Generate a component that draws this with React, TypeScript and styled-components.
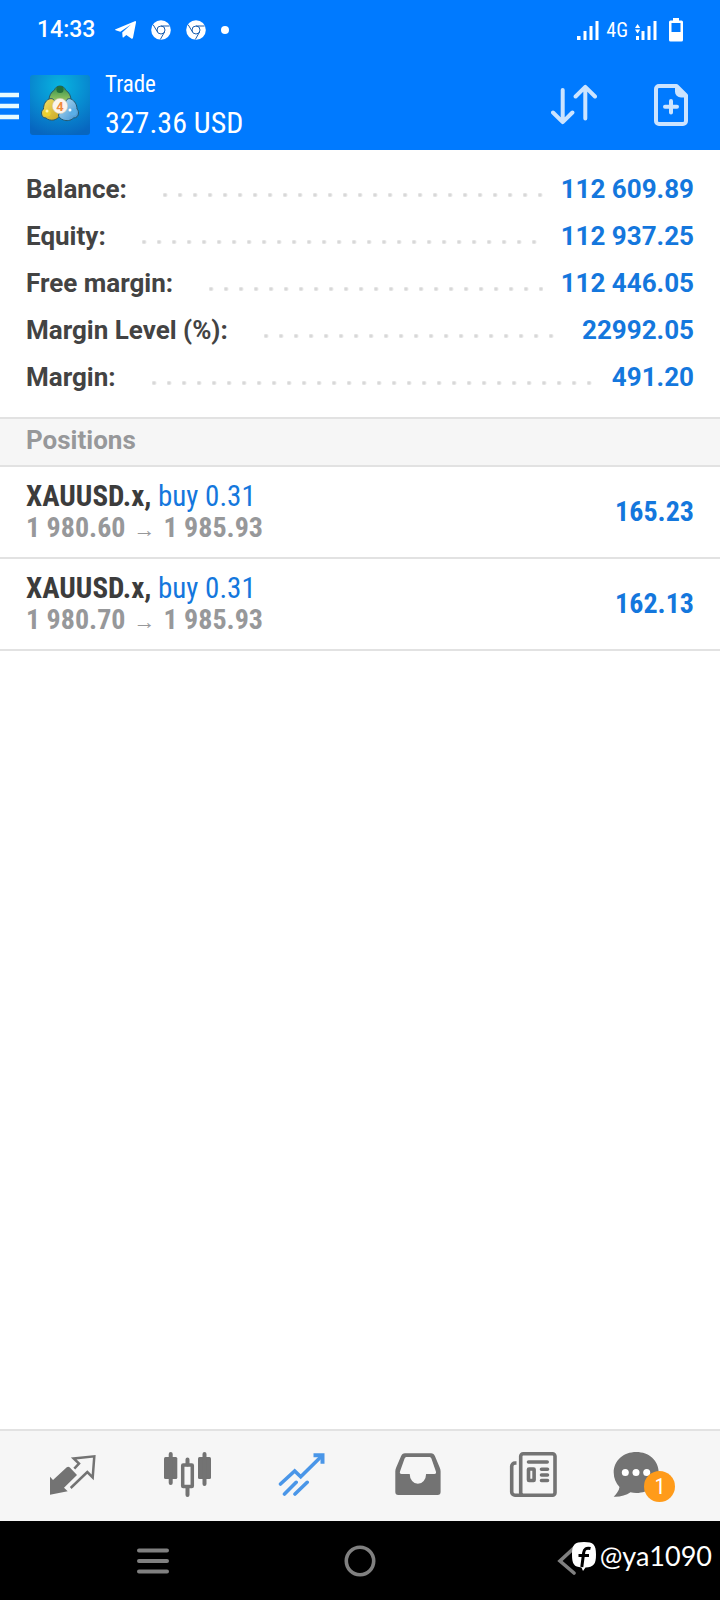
import React from "react";
import styled, { createGlobalStyle } from "styled-components";

const sans = `Roboto, "Liberation Sans", sans-serif`;
const narrow = `"Roboto Condensed", "Liberation Sans Narrow", Roboto, sans-serif`;
const blue = "#1477dd";

const GlobalStyle = createGlobalStyle`
  *, *::before, *::after { box-sizing: border-box; }
  body { margin: 0; background: #fff; font-family: ${sans}; }
  h1, h2, p, dl, dd, ul { margin: 0; padding: 0; }
  svg { display: block; flex: none; }
`;

const Screen = styled.div`
  display: flex;
  flex-direction: column;
  min-height: 100vh;
`;

const Header = styled.header`
  background: #007aff;
  color: #fff;
`;

const StatusBar = styled.div`
  display: flex;
  align-items: center;
  justify-content: space-between;
  height: 60px;
  padding: 0 37px;
`;

const StatusGroup = styled.div<{ $gap: number }>`
  display: flex;
  align-items: center;
  gap: ${(p) => p.$gap}px;
`;

const Clock = styled.time`
  margin-right: 5px;
  font-size: 23px;
  line-height: 28px;
  font-weight: 500;
`;

const NetworkType = styled.span`
  font-family: ${narrow};
  font-size: 20px;
  line-height: 24px;
`;

const AppBar = styled.div`
  display: flex;
  align-items: center;
  height: 90px;
  padding-right: 32px;
`;

const IconButton = styled.button`
  display: flex;
  align-items: center;
  justify-content: center;
  padding: 0;
  border: 0;
  background: none;
  color: inherit;
  cursor: pointer;
`;

const Logo = styled.svg`
  margin: 0 15px 0 11px;
`;

const Heading = styled.div`
  flex: 1;
  font-family: ${narrow};
`;

const Title = styled.h1`
  font-size: 23px;
  line-height: 36px;
  font-weight: 400;
`;

const Profit = styled.p`
  font-size: 30px;
  line-height: 40px;
`;

const Actions = styled.div`
  display: flex;
  align-items: center;
  gap: 57px;
  color: #cce4ff;
`;

const Content = styled.main`
  flex: 1;
`;

const Summary = styled.dl`
  && {
    padding: 16px 26px;
  }
  font-size: 26px;
  line-height: 47px;
`;

const SummaryRow = styled.div`
  display: flex;
`;

const SummaryLabel = styled.dt`
  color: #434343;
  font-weight: 700;
`;

const SummaryValue = styled.dd`
  display: flex;
  flex: 1;
  color: ${blue};
  font-weight: 700;
`;

const Leader = styled.span`
  flex: 1;
  margin: 0 18px 0 36px;
  background: radial-gradient(circle at 2px 2px, #d8d8d8 1px, transparent 3px) 0 27px / 15px 4px
    repeat-x;
`;

const SectionTitle = styled.h2`
  && {
    padding: 0 26px 4px;
  }
  border: solid #e2e2e2;
  border-width: 2px 0;
  background: #f6f6f6;
  color: #97989a;
  font-size: 26px;
  line-height: 42px;
  font-weight: 700;
`;

const PositionList = styled.ul`
  list-style: none;
  font-family: ${narrow};
  font-size: 28px;
  line-height: 32px;
  font-weight: 700;
`;

const PositionRow = styled.li`
  display: flex;
  align-items: center;
  justify-content: space-between;
  padding: 13px 26px;
  border-bottom: 2px solid #e2e2e2;
`;

const SymbolLine = styled.p`
  color: #3c3c3c;
  font-size: 29px;
`;

const Volume = styled.span`
  color: ${blue};
  font-weight: 400;
`;

const PriceLine = styled.p`
  color: #97989a;
`;

const Arrow = styled.span`
  margin: 0 8px;
  font-family: "Liberation Sans", sans-serif;
  font-size: 22px;
  line-height: 1;
  font-weight: 700;
`;

const Result = styled.span`
  color: ${blue};
`;

const TabBar = styled.nav`
  display: grid;
  grid-template-columns: repeat(6, 1fr);
  height: 92px;
  padding: 0 14px;
  border-top: 2px solid #e2e2e2;
  background: #f6f6f6;
`;

const TabButton = styled(IconButton)<{ $active?: boolean }>`
  color: ${(p) => (p.$active ? "#4a96e8" : "#737373")};
`;

const BadgeHost = styled.span`
  position: relative;
`;

const Badge = styled.span`
  position: absolute;
  left: 32px;
  top: 19px;
  width: 31px;
  height: 31px;
  border-radius: 50%;
  background: #ff9b1a;
  color: #fff;
  font-family: ${narrow};
  font-size: 22px;
  line-height: 31px;
  text-align: center;
`;

const SystemBar = styled.footer`
  position: relative;
  display: grid;
  grid-template-columns: repeat(3, 1fr);
  height: 79px;
  padding: 0 50px;
  background: #000;
  color: #808080;
`;

const Watermark = styled.div`
  position: absolute;
  right: 8px;
  top: 18px;
  display: flex;
  align-items: center;
  gap: 3px;
  color: #fff;
  font-family: Lato, sans-serif;
  font-size: 27px;
  line-height: 34px;
`;

const Telegram = () => (
  <svg width="21" height="18" viewBox="0 0 21 18" aria-hidden="true">
    <path
      fill="#fff"
      d="M.6 8.2 19.8.2c.8-.3 1.4.2 1.2 1.2l-3 15.3c-.2 1-.9 1.3-1.7.8l-5-3.6-2.6 2.4c-.5.5-1 .3-1.1-.4l-.4-4.4 8.8-8.1L5.3 10.7.7 9.3c-.8-.3-.9-.8-.1-1.1z"
    />
  </svg>
);

const Chrome = () => (
  <svg width="20" height="20" viewBox="0 0 20 20" aria-hidden="true">
    <circle cx="10" cy="10" r="9.8" fill="#fff" />
    <g fill="none" stroke="#1a5fb0" strokeWidth="1">
      <circle cx="10" cy="10" r="4" />
      <path d="M10 6h8.6M6.5 12 2.2 4.8M13.5 12 9.3 19.5" />
    </g>
  </svg>
);

const Dot = () => (
  <svg width="8" height="8" aria-hidden="true">
    <circle cx="4" cy="4" r="4" fill="#fff" />
  </svg>
);

const Signal = ({ data = false }: { data?: boolean }) => (
  <svg width="22" height="20" viewBox="0 0 22 20" fill="#fff" aria-hidden="true">
    <path d={data ? "M1 16h3v4H1z" : "M0 16h3.5v4H0z"} />
    <path d="M6.500 11h3v9h-3zM12.500 6h3v14h-3zM18.500 1h3v19h-3z" />
    {data && <path d="M2.600 4 5.200 8H0zM2.600 13.500 5.200 9.500H0z" />}
  </svg>
);

const Battery = () => (
  <svg width="14" height="24" viewBox="0 0 14 24" aria-hidden="true">
    <path
      fill="#fff"
      fillRule="evenodd"
      d="M4 0h6v2.500h2.500A1.500 1.500 0 0 1 14 4v18a1.500 1.500 0 0 1-1.500 1.500h-11A1.500 1.500 0 0 1 0 22V4a1.500 1.500 0 0 1 1.500-1.500H4zM2.500 5v9h9V5z"
    />
  </svg>
);

const MenuBars = () => (
  <svg width="19" height="30" aria-hidden="true">
    <path stroke="#e6faff" strokeWidth="4.500" d="M0 5h19M0 16h19M0 27h19" />
  </svg>
);

const AppLogo = () => (
  <Logo width="60" height="60" viewBox="0 0 60 60" role="img" aria-label="MetaTrader 4">
    <defs>
      <radialGradient id="sky" cx="50%" cy="18%" r="85%">
        <stop offset="0" stopColor="#08b4e0" />
        <stop offset=".55" stopColor="#088ad0" />
        <stop offset="1" stopColor="#0766c0" />
      </radialGradient>
      <linearGradient id="leaf" x2="0" y2="1">
        <stop offset="0" stopColor="#2f8f4a" />
        <stop offset="1" stopColor="#b5d56a" />
      </linearGradient>
      <linearGradient id="gold" x2="1" y2="1">
        <stop offset="0" stopColor="#f4e26a" />
        <stop offset="1" stopColor="#c8a51e" />
      </linearGradient>
      <linearGradient id="water" x2="1" y2="1">
        <stop offset="0" stopColor="#b8e2f5" />
        <stop offset="1" stopColor="#3c8fd2" />
      </linearGradient>
    </defs>
    <rect width="60" height="60" rx="3" fill="url(#sky)" />
    <g stroke="#24586e" strokeWidth="1">
      <path
        fill="url(#leaf)"
        d="M30 11c3 0 5 2 5.500 4 3.500 2 5.500 6 5.500 10 0 3-2 5-4 5H23c-3 0-4-2-4-5 0-4 2-8 5.500-10 .5-2 2.500-4 5.500-4z"
      />
      <path
        fill="url(#gold)"
        d="M19 24c3-1 5 0 6 3l5 12c0 3-3 5-6 6-3 .5-6 0-8-2-3 0-4.500-2-4.500-5 0-2 1-3 2-4 0-4 1.500-8 5.500-10z"
      />
      <path
        fill="url(#water)"
        d="M41 24c4 2 6 6 6 10 1 1 1.500 2 1.500 4 0 3-2 5-5 5-3 3-7 3-10 2-3-1-5-3-5-5l7-13c1-3 3-4 5.500-3z"
      />
    </g>
    <circle cx="30" cy="14.500" r="3.600" fill="#22703c" />
    <circle cx="17" cy="38" r="3.600" fill="#ecd22f" />
    <circle cx="43" cy="37" r="3.600" fill="#5aaee6" />
    <circle cx="17" cy="36" r="1.500" fill="#fff6b0" />
    <circle cx="40" cy="35" r="1.500" fill="#fff" />
    <circle cx="30" cy="31" r="7.600" fill="#fbf4ec" stroke="#d8cfb8" strokeWidth=".6" />
    <text
      x="30"
      y="35.500"
      fill="#f08a3c"
      fontFamily="Roboto, sans-serif"
      fontSize="13"
      fontWeight="700"
      textAnchor="middle"
    >
      4
    </text>
  </Logo>
);

const SortArrows = () => (
  <svg width="46" height="42" viewBox="0 0 46 42" aria-hidden="true">
    <path
      fill="none"
      stroke="currentColor"
      strokeWidth="4"
      strokeLinecap="round"
      strokeLinejoin="round"
      d="M11.700 6v32M2 28.500l9.700 9.700 9.700-9.700M34.300 34.500V3M24.600 12.500l9.700-9.700 9.700 9.700"
    />
  </svg>
);

const NewOrder = () => (
  <svg width="34" height="42" viewBox="0 0 34 42" aria-hidden="true">
    <path
      fill="none"
      stroke="currentColor"
      strokeWidth="4"
      strokeLinejoin="round"
      d="M5 2h17.500L32 11.500V37a3 3 0 0 1-3 3H5a3 3 0 0 1-3-3V5a3 3 0 0 1 3-3z"
    />
    <path fill="currentColor" d="M21 1h2l10 10v2.500h-6a6 6 0 0 1-6-6z" />
    <path
      stroke="currentColor"
      strokeWidth="4"
      strokeLinecap="round"
      d="M17 17v11.500M11 22.800h12"
    />
  </svg>
);

const QuotesIcon = () => (
  <svg width="48" height="48" viewBox="0 0 48 48" aria-hidden="true">
    <path
      fill="currentColor"
      d="M2 24.700 5 28 18.800 15.300q1.500-1.200 2.800 0L29 23 16 35.700l3.700 3.500L2 42.700z"
    />
    <path
      fill="none"
      stroke="currentColor"
      strokeWidth="2.500"
      d="M26.300 16.700 31 11.500 25.700 6.500 46.300 4.300l-1.600 21.200-5.400-5.400L22.700 36"
    />
  </svg>
);

const ChartIcon = () => (
  <svg width="48" height="48" viewBox="0 0 48 48" aria-hidden="true">
    <rect x="1" y="5" width="13.300" height="22" rx="1.500" fill="currentColor" />
    <rect x="35" y="5" width="13" height="22" rx="1.500" fill="currentColor" />
    <rect
      x="19.700"
      y="13"
      width="9.600"
      height="21.500"
      rx=".5"
      fill="none"
      stroke="currentColor"
      strokeWidth="3.500"
    />
    <path
      stroke="currentColor"
      strokeWidth="4"
      strokeLinecap="round"
      d="M7.700 2v29M41.500 2v30M24.500 7.500v5M24.500 35v8"
    />
  </svg>
);

const TradeIcon = () => (
  <svg width="48" height="48" viewBox="0 0 48 48" aria-hidden="true">
    <g fill="none" stroke="currentColor" strokeWidth="3.600">
      <path d="M2.500 32 16.700 19l6 5.700L44 3.800M6.500 42 18.200 30.300M17 42 29.200 30.300" strokeLinecap="round" />
      <path d="M35.500 3.200h9v8.600" strokeWidth="4" />
    </g>
  </svg>
);

const HistoryIcon = () => (
  <svg width="48" height="48" viewBox="0 0 48 48" aria-hidden="true">
    <path
      fill="currentColor"
      fillRule="evenodd"
      d="M11 1.300h26c2 0 3.200 1 4 3l4.700 11.200c.6 1.500.9 2.500.9 4V40a3 3 0 0 1-3 3H4.300a3 3 0 0 1-3-3V19.500c0-1.500.3-2.500.9-4L7 4.300c.8-2 2-3 4-3zM13 5c-1.500 0-2 .5-2.500 1.700L6 19.500C5.500 21 6 22 7.500 22h8.200a8.200 9.800 0 0 0 16.400 0h8.300c1.500 0 2-1 1.500-2.500L37.500 6.700C37 5.500 36.500 5 35 5z"
    />
  </svg>
);

const NewsIcon = () => (
  <svg width="48" height="48" viewBox="0 0 48 48" aria-hidden="true">
    <g fill="none" stroke="currentColor" strokeWidth="3.600">
      <rect x="11.700" y="1.800" width="34.300" height="41.500" rx="2.500" />
      <path d="M7.500 11H6a3.300 3.300 0 0 0-3.300 3.300V40a3.300 3.300 0 0 0 3.300 3.200h8" />
      <rect x="19.500" y="17" width="5.600" height="11.500" rx=".5" />
      <path strokeLinecap="round" d="M19.500 10h18.700M32.500 17.300h6M32.500 23h6M32.500 28.500h6" />
    </g>
  </svg>
);

const ChatIcon = () => (
  <svg width="72" height="48" viewBox="0 0 72 48" aria-hidden="true">
    <path
      fill="currentColor"
      d="M24.300 0C37 0 46.700 8.500 46.700 20.500S37 41 24.300 41c-2 0-4-.2-5.800-.7C14 43.500 8 45 1.700 44.700c3-3 5.300-6 5.800-9.700C4 31.300 1.700 26.500 1.700 20.500 1.700 8.500 11.500 0 24.300 0z"
    />
    <g fill="#fff">
      <circle cx="13.300" cy="20.500" r="3.500" />
      <circle cx="24" cy="20.500" r="3.500" />
      <circle cx="34.700" cy="20.500" r="3.500" />
    </g>
  </svg>
);

const RecentsIcon = () => (
  <svg width="34" height="30" aria-hidden="true">
    <path
      stroke="currentColor"
      strokeWidth="4"
      strokeLinecap="round"
      d="M3 4.500h28M3 15h28M3 25.500h28"
    />
  </svg>
);

const HomeIcon = () => (
  <svg width="32" height="32" aria-hidden="true">
    <circle cx="16" cy="16" r="13.700" fill="none" stroke="currentColor" strokeWidth="3.600" />
  </svg>
);

const BackIcon = () => (
  <svg width="20" height="30" aria-hidden="true">
    <path
      fill="none"
      stroke="currentColor"
      strokeWidth="3.600"
      strokeLinecap="round"
      d="M17 2 3 15l14 12"
    />
  </svg>
);

const SocialMark = () => (
  <svg width="26" height="30" viewBox="0 0 26 30" aria-hidden="true">
    <path
      fill="#fff"
      d="M13 1c9.500 0 12 2.500 12 12.500S22.500 26 14.500 26.500L12 30l-1.500-3.600C3 26 1 23 1 13.500 1 3.500 3.500 1 13 1z"
    />
    <path
      fill="none"
      stroke="#000"
      strokeWidth="3"
      d="M19.500 7.500c-4-1-6.300.3-6.800 4L10.800 26M7.500 14.500h10.500"
    />
  </svg>
);

const summary = [
  ["Balance:", "112 609.89"],
  ["Equity:", "112 937.25"],
  ["Free margin:", "112 446.05"],
  ["Margin Level (%):", "22992.05"],
  ["Margin:", "491.20"],
];

const positions = [
  { symbol: "XAUUSD.x,", volume: "buy 0.31", open: "1 980.60", now: "1 985.93", result: "165.23" },
  { symbol: "XAUUSD.x,", volume: "buy 0.31", open: "1 980.70", now: "1 985.93", result: "162.13" },
];

export default function App() {
  return (
    <Screen>
      <GlobalStyle />
      <Header>
        <StatusBar>
          <StatusGroup $gap={15}>
            <Clock>14:33</Clock>
            <Telegram />
            <Chrome />
            <Chrome />
            <Dot />
          </StatusGroup>
          <StatusGroup $gap={7}>
            <Signal />
            <NetworkType>4G</NetworkType>
            <StatusGroup $gap={12}>
              <Signal data />
              <Battery />
            </StatusGroup>
          </StatusGroup>
        </StatusBar>
        <AppBar>
          <IconButton type="button" aria-label="Menu">
            <MenuBars />
          </IconButton>
          <AppLogo />
          <Heading>
            <Title>Trade</Title>
            <Profit>327.36 USD</Profit>
          </Heading>
          <Actions>
            <IconButton type="button" aria-label="Sort">
              <SortArrows />
            </IconButton>
            <IconButton type="button" aria-label="New order">
              <NewOrder />
            </IconButton>
          </Actions>
        </AppBar>
      </Header>

      <Content>
        <Summary>
          {summary.map(([label, value]) => (
            <SummaryRow key={label}>
              <SummaryLabel>{label}</SummaryLabel>
              <SummaryValue>
                <Leader aria-hidden="true" />
                {value}
              </SummaryValue>
            </SummaryRow>
          ))}
        </Summary>
        <SectionTitle>Positions</SectionTitle>
        <PositionList>
          {positions.map((p) => (
            <PositionRow key={p.open}>
              <div>
                <SymbolLine>
                  {p.symbol} <Volume>{p.volume}</Volume>
                </SymbolLine>
                <PriceLine>
                  {p.open}
                  <Arrow>→</Arrow>
                  {p.now}
                </PriceLine>
              </div>
              <Result>{p.result}</Result>
            </PositionRow>
          ))}
        </PositionList>
      </Content>

      <TabBar aria-label="Sections">
        <TabButton type="button" aria-label="Quotes">
          <QuotesIcon />
        </TabButton>
        <TabButton type="button" aria-label="Charts">
          <ChartIcon />
        </TabButton>
        <TabButton type="button" aria-label="Trade" $active>
          <TradeIcon />
        </TabButton>
        <TabButton type="button" aria-label="History">
          <HistoryIcon />
        </TabButton>
        <TabButton type="button" aria-label="News">
          <NewsIcon />
        </TabButton>
        <TabButton type="button" aria-label="Messages">
          <BadgeHost>
            <ChatIcon />
            <Badge>1</Badge>
          </BadgeHost>
        </TabButton>
      </TabBar>

      <SystemBar>
        <IconButton type="button" aria-label="Recent apps">
          <RecentsIcon />
        </IconButton>
        <IconButton type="button" aria-label="Home">
          <HomeIcon />
        </IconButton>
        <IconButton type="button" aria-label="Back">
          <BackIcon />
        </IconButton>
        <Watermark>
          <SocialMark />
          <span>@ya1090</span>
        </Watermark>
      </SystemBar>
    </Screen>
  );
}
